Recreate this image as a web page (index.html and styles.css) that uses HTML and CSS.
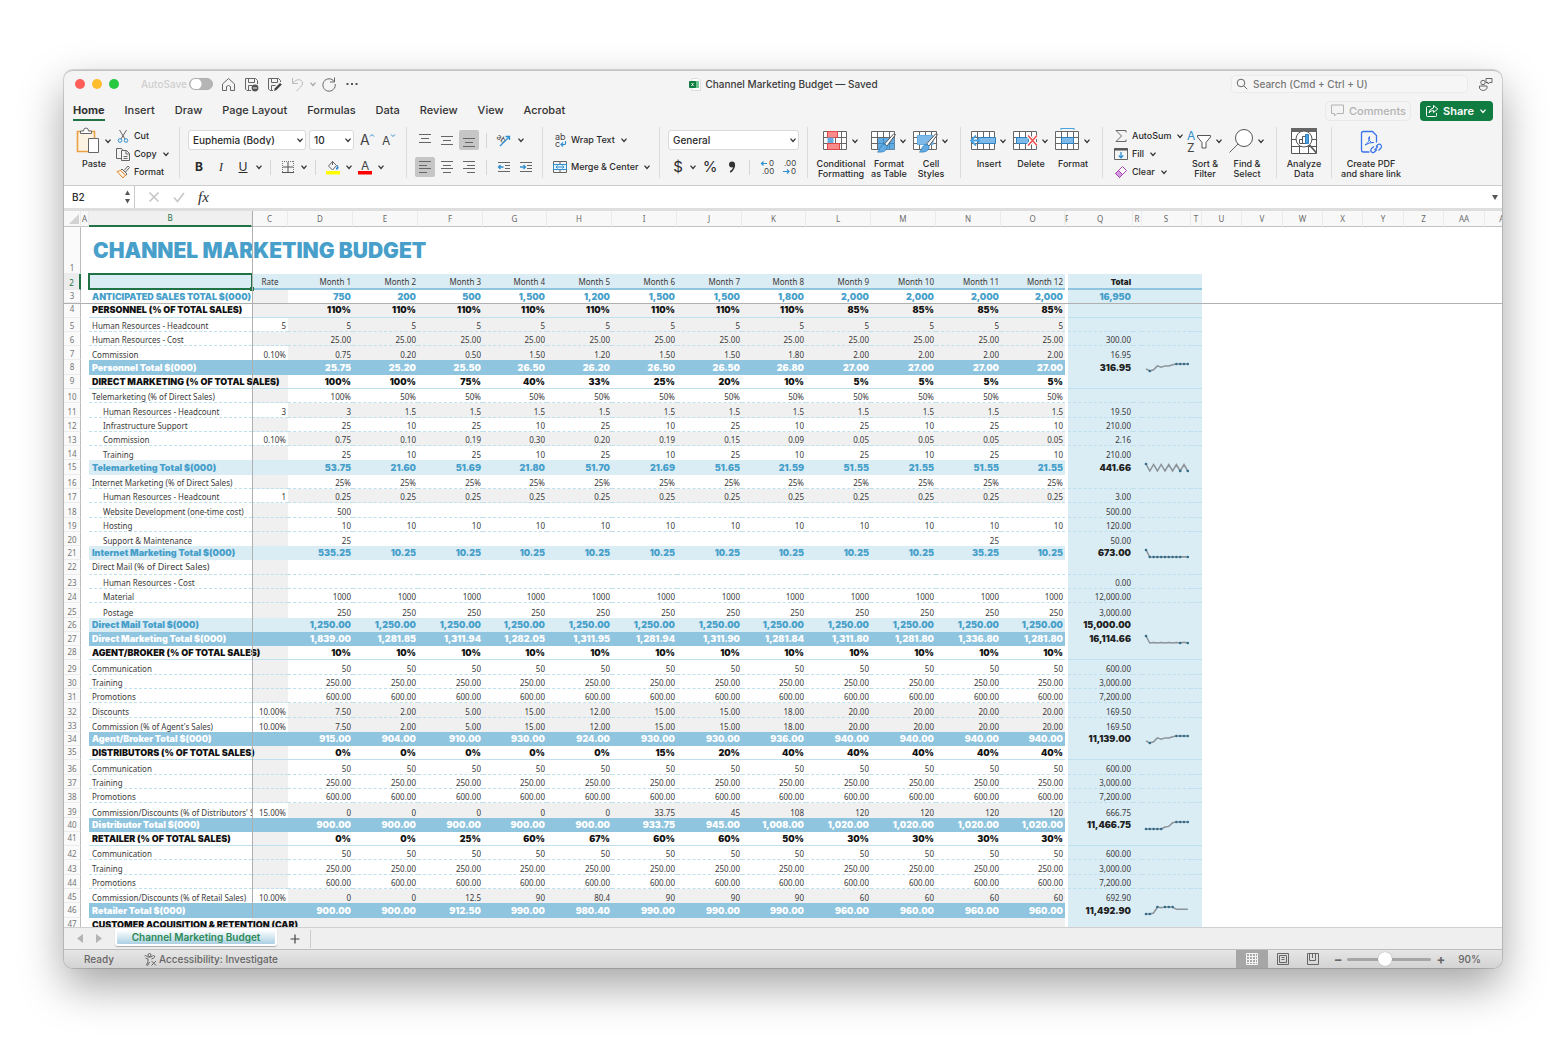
FILE: index.html
```html
<!DOCTYPE html>
<html lang="en">
<head>
<meta charset="utf-8">
<title>Channel Marketing Budget</title>
<link rel="stylesheet" href="styles.css">
</head>
<body>
<svg class="defs" aria-hidden="true">
  <symbol id="chev" viewBox="0 0 8 8"><path d="M1.500 2.600 4 5.400 6.500 2.600" fill="none" stroke="currentColor" stroke-width="1.300"/></symbol>
  <symbol id="grid" viewBox="0 0 26 26"><path d="M1.500 3.500h23v18h-23zM1.500 9.500h23M1.500 15.500h23M7.500 3.500v18M13.500 3.500v18M19.500 3.500v18" fill="#fff" stroke="#666"/></symbol>
  <symbol id="brush" viewBox="0 0 26 26"><path d="M25.500 6.500 17 18l-2.500-2L23.500 6z" fill="#fff" stroke="#555"/><path d="M14 16.500c2 0 3.500 1.500 3 3.500-1 3.500-5 4.500-9.500 4 2.500-1.500 1.500-6 6.500-7.500z" fill="#62ace3" stroke="#2f80bd" stroke-width=".8"/></symbol>
</svg>

<main class="window">
  <header class="titlebar">
    <div class="tools">
      <span class="lights"><i class="red"></i><i class="amber"></i><i class="green"></i></span>
      <label class="autosave">AutoSave <input type="checkbox" class="toggle"></label>
      <button aria-label="Home"><svg width="15" height="15" viewBox="0 0 15 15"><path d="M1.500 7 7.500 1.500 13.500 7v6.500h-4V9.500q-2-2-4 0v4h-4z" class="ln"/></svg></button>
      <button aria-label="Save"><svg width="15" height="15" viewBox="0 0 15 15"><path d="M7 13.500H3L1.500 12V1.500h10l2 2V7M4.500 1.500v4h6v-4M4.500 13V8.500h4" class="ln"/><circle cx="11" cy="11" r="3.400" fill="#555"/><path d="M9 11h4" stroke="#eee"/></svg></button>
      <button aria-label="Save as"><svg width="15" height="15" viewBox="0 0 15 15"><path d="M6 13.500H3L1.500 12V1.500h10l2 2V5M4.500 1.500v4h6v-4M4.500 13V8.500h4" class="ln"/><path d="m7 14 .8-2.800L13 6l1.800 1.600L9.500 13z" fill="#444"/></svg></button>
      <button aria-label="Undo" class="dim"><svg width="15" height="15" viewBox="0 0 15 15"><path d="M2.500 1v5.500H8M2.500 6.500C6 1.500 12 1.500 12.500 6c.2 3-3 4.500-6 8" class="ln"/></svg></button>
      <svg class="chev dim"><use href="#chev"/></svg>
      <button aria-label="Redo"><svg width="16" height="16" viewBox="0 0 16 16"><path d="M13.500 1.500v4.500H9M13.200 5.500A6.200 6.200 0 1 0 14.200 8" class="ln"/></svg></button>
      <button aria-label="More"><svg width="14" height="14" viewBox="0 0 14 14"><path d="M1.500 7h2M6 7h2M10.500 7h2" stroke="#555" stroke-width="2"/></svg></button>
    </div>
    <h1 class="doc"><svg width="13" height="13" viewBox="0 0 13 13"><path d="M4 .5h6l2.500 2.500v9.500H4z" fill="#fff" stroke="#ddd"/><path d="M7 3h4v7H7z" fill="#6fc492"/><rect x="1" y="3" width="7" height="7" rx="1" fill="#107c41"/><path d="m3.500 5 2 3M5.500 5l-2 3" stroke="#fff" stroke-width=".8"/></svg>Channel Marketing Budget — Saved</h1>
    <div class="find">
      <label class="search"><svg width="12" height="12" viewBox="0 0 12 12"><circle cx="5" cy="5" r="3.800" class="ln"/><path d="m8 8 3.200 3.200" class="ln"/></svg><input type="search" aria-label="Search" placeholder="Search (Cmd + Ctrl + U)"></label>
      <button aria-label="Share presence"><svg width="15" height="15" viewBox="0 0 15 15"><path d="M8 1.500h6v4h-2.500L10 7V5.500H8z" class="ln"/><circle cx="5" cy="5.500" r="2.200" class="ln"/><path d="M1.500 9h7.500v2.500q-3.700 4-7.500 0z" class="ln"/></svg></button>
    </div>
  </header>

  <nav class="tabs">
    <a href="#" class="on">Home</a><a href="#">Insert</a><a href="#">Draw</a><a href="#">Page Layout</a><a href="#">Formulas</a><a href="#">Data</a><a href="#">Review</a><a href="#">View</a><a href="#">Acrobat</a>
    <button class="comments"><svg width="15" height="15" viewBox="0 0 15 15"><path d="M1.500 2h12v8.500H7L4.500 13v-2.500h-3z" class="ln"/></svg>Comments</button>
    <button class="share"><svg width="14" height="14" viewBox="0 0 14 14"><path d="M5.500 2.500h-3q-1 0-1 1v8q0 1 1 1h8q1 0 1-1V9M8.500 1.500 12.800 5 8.500 8.500v-2q-3 0-4.500 2.500.5-4.500 4.500-5z" fill="none" stroke="#fff"/></svg>Share<svg class="chev"><use href="#chev"/></svg></button>
  </nav>

  <section class="ribbon" aria-label="Home ribbon">
    <div class="group g-clip">
      <button class="big paste"><span class="art"><svg width="26" height="28" viewBox="0 0 26 28"><path d="M2.500 4.500h17v20h-17z" fill="#fdf3e3" stroke="#eca045" stroke-width="1.600"/><path d="M5.500 6.500V4h3q0-3 2.500-3t2.500 3h3v2.500z" fill="#fff" stroke="#666"/><path d="M13.500 11.500h10v14h-10z" fill="#fff" stroke="#666"/></svg><svg class="chev"><use href="#chev"/></svg></span>Paste</button>
      <div class="stack">
        <button><svg width="14" height="14" viewBox="0 0 14 14"><path d="M3.500 1 9 10M10.500 1 5 10" class="ln"/><circle cx="4" cy="11.500" r="1.800" fill="none" stroke="#2f8fd0"/><circle cx="10" cy="11.500" r="1.800" fill="none" stroke="#2f8fd0"/></svg>Cut</button>
        <button><svg width="14" height="14" viewBox="0 0 14 14"><path d="M5 11.500H.500v-10h5l1.500 2M5.500 3.500h5l3 3v7h-8zM10 3.500V7h3.500M7.500 9.500h4M7.500 11.500h4" class="ln"/></svg>Copy<svg class="chev"><use href="#chev"/></svg></button>
        <button><svg width="14" height="14" viewBox="0 0 14 14"><path d="M8 5.500 12 1l1.500 1.500L9.500 7M6 4l5 5-1.500 1.500-5-5z" class="ln"/><path d="M4.500 5.500 1 6.500 7 13l2.500-3z" fill="#fdf3e3" stroke="#e8872e"/></svg>Format</button>
      </div>
    </div>

    <div class="group rows g-font">
      <div class="row">
        <span class="pick font"><select aria-label="Font"><option>Euphemia (Body)</option></select><svg class="chev"><use href="#chev"/></svg></span>
        <span class="pick size"><select aria-label="Font size"><option>10</option></select><svg class="chev"><use href="#chev"/></svg></span>
        <button class="ib" aria-label="Grow font"><svg width="16" height="18" viewBox="0 0 16 18"><text x="1" y="14" font-size="14" fill="#444">A</text><path d="m11 5.500 2-2 2 2" fill="none" stroke="#2f8fd0"/></svg></button>
        <button class="ib" aria-label="Shrink font"><svg width="16" height="18" viewBox="0 0 16 18"><text x="1" y="14" font-size="12" fill="#444">A</text><path d="m10 3.500 2 2 2-2" fill="none" stroke="#2f8fd0"/></svg></button>
      </div>
      <div class="row">
        <button class="ib bold">B</button><button class="ib ital">I</button><button class="ib under">U</button><svg class="chev"><use href="#chev"/></svg>
        <i class="sep"></i>
        <button class="ib" aria-label="Borders"><svg width="14" height="14" viewBox="0 0 14 14"><path d="M1.500 1v11M12.500 1v11M1 1.500h12" stroke="#777" stroke-dasharray="1 1"/><path d="M1 12.500h12M7 2v10M2 7h10" stroke="#555"/></svg></button><svg class="chev"><use href="#chev"/></svg>
        <i class="sep"></i>
        <button class="ib" aria-label="Fill colour"><svg width="14" height="15" viewBox="0 0 14 15"><path d="m6.500 1.500 4 4-4 4.500-4-4zM6.500 5V1" class="ln"/><path d="M11 5q2 3 .5 4t-1-1" fill="#2f8fd0" stroke="#2f8fd0"/><path d="M0 11h14v3.500H0z" fill="#ffff00"/></svg></button><svg class="chev"><use href="#chev"/></svg>
        <button class="ib" aria-label="Font colour"><svg width="14" height="16" viewBox="0 0 14 16"><text x="3" y="11" font-size="12" fill="#444">A</text><path d="M0 12h14v3.500H0z" fill="#f00"/></svg></button><svg class="chev"><use href="#chev"/></svg>
      </div>
    </div>

    <div class="group rows g-align">
      <div class="row">
        <button class="ab" aria-label="Top align"><svg width="14" height="14" viewBox="0 0 14 14"><path d="M1 1.500h12M3 5.500h8M1 9.500h12" class="ln"/></svg></button>
        <button class="ab" aria-label="Middle align"><svg width="14" height="14" viewBox="0 0 14 14"><path d="M1 3.500h12M3 7.500h8M1 11.500h12" class="ln"/></svg></button>
        <button class="ab on" aria-label="Bottom align"><svg width="14" height="14" viewBox="0 0 14 14"><path d="M1 5.500h12M3 9.500h8M1 13.500h12" class="ln"/></svg></button>
        <i class="sep"></i>
        <button class="ab" aria-label="Orientation"><svg width="16" height="14" viewBox="0 0 16 14"><text x="0" y="7" font-size="8" fill="#444" transform="rotate(35 3 6)">ab</text><path d="M4 13 13 4M9.500 3.500h4V7" fill="none" stroke="#2f8fd0" stroke-width="1.300"/></svg></button><svg class="chev"><use href="#chev"/></svg>
      </div>
      <div class="row">
        <button class="ab on" aria-label="Align left"><svg width="14" height="14" viewBox="0 0 14 14"><path d="M1 1.500h12M1 5.500h8M1 8.500h12M1 12.500h8" class="ln"/></svg></button>
        <button class="ab" aria-label="Center"><svg width="14" height="14" viewBox="0 0 14 14"><path d="M1 1.500h12M3 5.500h8M1 8.500h12M3 12.500h8" class="ln"/></svg></button>
        <button class="ab" aria-label="Align right"><svg width="14" height="14" viewBox="0 0 14 14"><path d="M1 1.500h12M5 5.500h8M1 8.500h12M5 12.500h8" class="ln"/></svg></button>
        <i class="sep"></i>
        <button class="ab" aria-label="Decrease indent"><svg width="14" height="14" viewBox="0 0 14 14"><path d="M1 2.500h12M8 5.500h5M8 8.500h5M1 11.500h12" class="ln"/><path d="M6.500 7H1.500M3.500 5l-2 2 2 2" fill="none" stroke="#2f8fd0" stroke-width="1.300"/></svg></button>
        <button class="ab" aria-label="Increase indent"><svg width="14" height="14" viewBox="0 0 14 14"><path d="M1 2.500h12M8 5.500h5M8 8.500h5M1 11.500h12" class="ln"/><path d="M1 7h5.500M4.500 5l2 2-2 2" fill="none" stroke="#2f8fd0" stroke-width="1.300"/></svg></button>
      </div>
    </div>

    <div class="group rows g-wrap">
      <button class="txt"><svg width="14" height="16" viewBox="0 0 14 16"><text x="2" y="8" font-size="9" fill="#444">ab</text><text x="2" y="15" font-size="9" fill="#444">c</text><path d="M12.500 9v2.500q0 1-1 1H8M10 10.500l-2 2 2 2" fill="none" stroke="#2f8fd0" stroke-width="1.200"/></svg>Wrap Text<svg class="chev"><use href="#chev"/></svg></button>
      <button class="txt"><svg width="14" height="14" viewBox="0 0 14 14"><path d="M.500 1.500h13v11H.500zM7 1.500V4M7 10v2.500" class="ln"/><path d="M.500 4.500h13v5H.500z" fill="#e4f2fb" stroke="#2f8fd0"/><path d="M3 7h8M4.500 5.500 3 7l1.500 1.500M9.500 5.500 11 7 9.500 8.500" fill="none" stroke="#2f8fd0"/></svg>Merge &amp; Center<svg class="chev"><use href="#chev"/></svg></button>
    </div>

    <div class="group rows g-num">
      <span class="pick general"><select aria-label="Number format"><option>General</option></select><svg class="chev"><use href="#chev"/></svg></span>
      <div class="row">
        <button class="nb">$</button><svg class="chev"><use href="#chev"/></svg><button class="nb pct">%</button><button class="nb comma" aria-label="Comma style"><svg width="10" height="14" viewBox="0 0 10 14"><circle cx="5" cy="4.500" r="3" fill="#333"/><path d="M7.200 4q1 4.500-4 8" fill="none" stroke="#333" stroke-width="1.600"/></svg></button>
        <i class="sep"></i>
        <button class="nb" aria-label="Increase decimal"><svg width="14" height="16" viewBox="0 0 14 16"><text x="9" y="7" font-size="8" fill="#444">0</text><text x="2" y="15" font-size="8" fill="#444">.00</text><path d="M7 4.500H1.500M3.500 2.500l-2 2 2 2" fill="none" stroke="#2f8fd0" stroke-width="1.200"/></svg></button>
        <button class="nb" aria-label="Decrease decimal"><svg width="14" height="16" viewBox="0 0 14 16"><text x="2" y="7" font-size="8" fill="#444">.00</text><text x="9" y="15" font-size="8" fill="#444">0</text><path d="M1 12.500h6M5 10.500l2 2-2 2" fill="none" stroke="#2f8fd0" stroke-width="1.200"/></svg></button>
      </div>
    </div>

    <div class="group g-style">
      <button class="big w52"><span class="art"><svg width="26" height="26" viewBox="0 0 26 26"><use href="#grid"/><path d="M5.500 3.500h10v6h-10z" fill="#fb8b8b" stroke="#e04848"/><path d="M5.500 9.500h6v6h-6z" fill="#62ace3"/><path d="M5.500 15.500h12v6h-12z" fill="#fb8b8b" stroke="#e04848"/></svg><svg class="chev"><use href="#chev"/></svg></span>Conditional<br>Formatting</button>
      <button class="big w44"><span class="art"><svg width="26" height="26" viewBox="0 0 26 26"><use href="#grid"/><path d="M8 10h16.500v11.500H8z" fill="#62ace3"/><path d="M8 15.500h16M13.500 10v11M19.500 10v11" stroke="#3f87c0"/><use href="#brush"/></svg><svg class="chev"><use href="#chev"/></svg></span>Format<br>as Table</button>
      <button class="big w40"><span class="art"><svg width="26" height="26" viewBox="0 0 26 26"><use href="#grid"/><path d="M5.500 7.500h15.500v9H5.500z" fill="#7dbaea" stroke="#62ace3"/><use href="#brush"/></svg><svg class="chev"><use href="#chev"/></svg></span>Cell<br>Styles</button>
    </div>

    <div class="group g-cells">
      <button class="big w42"><span class="art"><svg width="26" height="26" viewBox="0 0 26 26"><use href="#grid"/><path d="M8 9.500h17.500v6H8z" fill="#7dbaea" stroke="#2f80bd"/><path d="M10 12.500H1.500M6 7.500l-5 5 5 5" fill="none" stroke="#4aa3e0" stroke-width="1.800"/></svg><svg class="chev"><use href="#chev"/></svg></span>Insert</button>
      <button class="big w42"><span class="art"><svg width="26" height="26" viewBox="0 0 26 26"><use href="#grid"/><path d="M4.500 9.500h12v6h-12z" fill="#7dbaea" stroke="#2f80bd"/><path d="m16 7.500 9 10M25 7.500l-9 10" stroke="#fff" stroke-width="4"/><path d="m16 7.500 9 10M25 7.500l-9 10" stroke="#ee4b4b" stroke-width="1.400"/></svg><svg class="chev"><use href="#chev"/></svg></span>Delete</button>
      <button class="big w42"><span class="art"><svg width="26" height="26" viewBox="0 0 26 26"><use href="#grid"/><path d="M7.500 9.500h12v6h-12z" fill="#7dbaea" stroke="#2f80bd"/><path d="M7 .500h13M7 0v2M20 0v2" stroke="#4aa3e0"/></svg><svg class="chev"><use href="#chev"/></svg></span>Format</button>
    </div>

    <div class="group g-edit">
      <div class="stack">
        <button><svg width="14" height="14" viewBox="0 0 14 14"><path d="M12 3.500V1.500H2L7.500 7 2 12.500h10v-2" class="ln"/></svg>AutoSum<svg class="chev"><use href="#chev"/></svg></button>
        <button><svg width="14" height="14" viewBox="0 0 14 14"><path d="M.500 1.500h13v11H.500z" class="ln"/><path d="M0 2.500h14" stroke="#555" stroke-width="2"/><path d="M7 5v6M4.800 8.500 7 10.800l2.200-2.300" fill="none" stroke="#2f8fd0" stroke-width="1.300"/></svg>Fill<svg class="chev"><use href="#chev"/></svg></button>
        <button><svg width="14" height="14" viewBox="0 0 14 14"><path d="m8.500 1.500 4 4-7 7-4-4z" fill="#fff" stroke="#a33fb0"/><path d="m4.500 5.500 4 4-3 3-4-4z" fill="#d59be0" stroke="#a33fb0"/></svg>Clear<svg class="chev"><use href="#chev"/></svg></button>
      </div>
      <button class="big w42"><span class="art"><svg width="26" height="26" viewBox="0 0 26 26"><text x="1" y="12" font-size="12" fill="#2f8fd0">A</text><text x="1" y="24" font-size="12" fill="#444">Z</text><path d="M11.500 7.500h13V9L20 14.500v5.500h-4v-5.500L11.500 9z" fill="#fff" stroke="#555"/></svg><svg class="chev"><use href="#chev"/></svg></span>Sort &amp;<br>Filter</button>
      <button class="big w42"><span class="art"><svg width="26" height="26" viewBox="0 0 26 26"><circle cx="16" cy="10" r="8.500" fill="#fff" stroke="#555"/><path d="M10 16 1.500 24.500" class="ln"/></svg><svg class="chev"><use href="#chev"/></svg></span>Find &amp;<br>Select</button>
    </div>

    <div class="group g-data">
      <button class="big"><span class="art"><svg width="28" height="28" viewBox="0 0 28 28"><path d="M1.500 1.500h25v25h-25zM1.500 12.500h25M1.500 19.500h25M9.500 6v20M18.500 6v20" fill="#fff" stroke="#555"/><path d="M1 1h26v4H1z" fill="#666"/><circle cx="14" cy="12" r="8" fill="#fff" stroke="#555"/><path d="m19.500 18 7 8" stroke="#555" stroke-width="1.600"/><path d="M9.500 12.500h3v4h-3zM12.500 9.500h3v7h-3z" fill="#fff" stroke="#555"/><path d="M15.500 7.500h3v9h-3z" fill="#4aa3e0" stroke="#2f80bd"/></svg></span>Analyze<br>Data</button>
    </div>
    <div class="group g-pdf">
      <button class="big"><span class="art"><svg width="24" height="26" viewBox="0 0 24 26"><path d="M10.500 24h-6q-2 0-2-2V5.500q0-2 2-2h9l4 4v7" fill="none" stroke="#3b73e8" stroke-width="1.300"/><path d="M6 17q5-3 4.500-8.500-2 1 0 4T15 14.500q-4-.5-9 2.500z" fill="none" stroke="#3b73e8"/><path d="m17 18.500 2-2q2-1 3 .5t0 3l-2.500 2.500M18 21.500l-2 2q-2 2-3.500.5t0-3.500l2.500-2M15.500 22l3.500-3.500" fill="none" stroke="#3b73e8" stroke-width="1.200"/></svg></span>Create PDF<br>and share link</button>
    </div>
  </section>

  <div class="formula">
    <label class="namebox"><input aria-label="Name box" value="B2"><svg width="7" height="16" viewBox="0 0 7 16"><path d="M3.500 1.500 6 6H1zM3.500 14.500 6 10H1z" fill="#555"/></svg></label>
    <button aria-label="Cancel"><svg width="12" height="12" viewBox="0 0 12 12"><path d="m1.500 1.500 9 9M10.500 1.500l-9 9" stroke="#c6c6c6" stroke-width="1.600"/></svg></button>
    <button aria-label="Enter"><svg width="12" height="12" viewBox="0 0 12 12"><path d="m1 6.500 3.500 4L11 2" fill="none" stroke="#c6c6c6" stroke-width="1.600"/></svg></button>
    <span class="fx">fx</span>
    <input class="entry" aria-label="Formula">
    <button aria-label="Expand"><svg width="6" height="6" viewBox="0 0 6 6"><path d="M0 1h6L3 6z" fill="#555"/></svg></button>
  </div>

  <section class="sheet">
    <table id="grid-table"></table>
    <i class="freeze-x"></i><i class="freeze-y"></i>
  </section>

  <div class="sheetbar">
    <button aria-label="Previous sheet"><svg width="6" height="9" viewBox="0 0 6 9"><path d="M6 0v9L0 4.500z" fill="#b4b4b4"/></svg></button>
    <button aria-label="Next sheet"><svg width="6" height="9" viewBox="0 0 6 9"><path d="M0 0v9l6-4.500z" fill="#b4b4b4"/></svg></button>
    <button class="tab">Channel Marketing Budget</button>
    <button class="add" aria-label="Add sheet"><svg width="10" height="10" viewBox="0 0 10 10"><path d="M5 .500v9M.500 5h9" stroke="#444" stroke-width="1.200"/></svg></button>
  </div>

  <footer class="status">
    <span>Ready</span>
    <button class="access"><svg width="13" height="13" viewBox="0 0 13 13"><circle cx="5.500" cy="2" r="1.500" class="ln"/><path d="M.500 3q1-1 2 0l1.500 1h3l1.500-1q1-1 2 0T9.500 5L7.500 6M1.500 5 4 6v2.500L2.500 12q.5 1 1.500 0l1.500-3" class="ln"/><path d="m7.500 8 4.500 4.500M12 8l-4.500 4.500" class="ln"/></svg>Accessibility: Investigate</button>
    <span class="views">
      <button class="on" aria-label="Normal view"><svg width="12" height="12" viewBox="0 0 12 12"><path d="M.500.500h11v11H.500zM.500 3.500h11M.500 6.500h11M.500 9.500h11M3.500.500v11M6.500.500v11M9.500.500v11" fill="none" stroke="#f4f4f4"/></svg></button>
      <button aria-label="Page layout view"><svg width="12" height="12" viewBox="0 0 12 12"><path d="M.500.500h11v11H.500zM2.500 2.500h7v7h-7zM4.500 4.500h3M4.500 6.500h3" class="ln"/></svg></button>
      <button aria-label="Page break view"><svg width="12" height="12" viewBox="0 0 12 12"><path d="M.500.500h11v11H.500zM2.500 1v6.500h6V1M5.500 1v4" class="ln"/></svg></button>
    </span>
    <span class="zoom">
      <b>−</b><input type="range" min="0" max="100" value="44" aria-label="Zoom"><b>+</b><span class="pc">90%</span>
    </span>
  </footer>
</main>
<script src="app.js"></script>
</body>
</html>
```

FILE: styles.css
```css
* { box-sizing: border-box; }
body {
  margin: 0;
  height: 100vh;
  padding: 70px 58px 92px 64px;
  background: #fff;
  font: 500 11px/14px Inter, "Liberation Sans", sans-serif;
  color: #2b2b2b;
}
button, input, select { font: inherit; color: inherit; border: 0; margin: 0; padding: 0; background: none; }
button { display: flex; align-items: center; justify-content: center; white-space: nowrap; flex: none; }
svg { display: block; flex: none; overflow: visible; }
svg text { font-family: Inter, "Liberation Sans", sans-serif; font-weight: 400; }
.defs { position: absolute; width: 0; height: 0; }
.ln { fill: none; stroke: #666; stroke-width: 1; }
.dim { opacity: .4; }
.chev { width: 8px; height: 8px; margin: 0 1px; color: #333; }

.window {
  height: 100%;
  display: flex;
  flex-direction: column;
  overflow: hidden;
  border-radius: 9px;
  background: #f4f4f4;
  border-top: 1px solid #c4c4c4;
  box-shadow: 0 0 0 1px rgba(0, 0, 0, .14), 0 18px 44px rgba(0, 0, 0, .36);
}

/* Title bar */
.titlebar { display: grid; grid-template-columns: 1fr auto 1fr; align-items: center; height: 26px; flex: none; }
.tools { display: flex; align-items: center; gap: 8px; padding-left: 11px; }
.lights { display: flex; gap: 7px; margin-right: 14px; }
.lights i { width: 10px; height: 10px; border-radius: 50%; }
.red { background: #fe5f57; }
.amber { background: #febc2e; }
.green { background: #28c840; }
.autosave { display: flex; align-items: center; gap: 2px; color: #cfcfcf; font-size: 10px; }
.toggle { appearance: none; width: 24px; height: 12px; border-radius: 6px; background: radial-gradient(circle at 6px 5px, #fff 5px, #b5b5b5 6px); border: 1px solid #b0b0b0; }
.tools > .chev { margin: 0 -4px; }
.doc { display: flex; align-items: center; gap: 4px; margin: 0; font: 500 10px/14px Inter, "Liberation Sans", sans-serif; color: #3a3a3a; }
.find { display: flex; justify-content: flex-end; align-items: center; gap: 10px; padding-right: 9px; }
.search { display: flex; align-items: center; gap: 5px; width: 237px; height: 18px; padding-left: 4px; border: 1px solid #ebebeb; border-radius: 4px; background: #f6f6f6; }
.search input { flex: 1; outline: 0; font-size: 10px; }
.search input::placeholder { color: #777; opacity: 1; }

/* Ribbon tabs */
.tabs { display: flex; align-items: center; gap: 20px; height: 27px; padding: 0 9px; flex: none; }
.tabs a { color: #333; text-decoration: none; line-height: 18px; border-bottom: 2px solid transparent; }
.tabs a.on { font-weight: 700; border-color: #217346; }
.comments { margin-left: auto; margin-right: -11px; width: 86px; height: 20px; gap: 4px; border: 1px solid #e8e8e8; border-radius: 5px; color: #b3b3b3; }
.comments .ln { stroke: #b3b3b3; }
.share { width: 73px; height: 20px; gap: 4px; border-radius: 4px; background: #107c41; color: #fff; font-weight: 600; }
.share .chev { color: #fff; }

/* Ribbon */
.ribbon { display: flex; height: 61px; flex: none; padding: 3px 0 7px; font-size: 9px; line-height: 10px; }
.group { display: flex; flex: none; border-right: 1px solid #dcdcdc; }
.rows { flex-direction: column; gap: 7px; padding-top: 3px; padding-left: 8px; }
.rows > * { height: 20px; }
.row { display: flex; align-items: center; }
.sep { width: 1px; height: 15px; background: #d5d5d5; margin: 0 7px; }
.stack { display: flex; flex-direction: column; gap: 4px; }
.stack button, .txt { gap: 4px; height: 14px; justify-content: flex-start; }
.rows .txt { height: 20px; }
.big { align-self: flex-start; display: block; font-size: 9px; line-height: 10px; text-align: center; }
.art { display: flex; align-items: center; justify-content: center; gap: 2px; height: 28px; margin-bottom: 4px; }
.w52 { width: 52px; }
.w44 { width: 44px; }
.w42 { width: 42px; }
.w40 { width: 40px; }
.g-clip { width: 116px; padding-left: 12px; gap: 4px; }
.g-clip .stack, .g-edit .stack { padding-top: 2px; }
.paste { width: 36px; }
.g-font { width: 227px; }
.pick { display: inline-grid; align-items: center; height: 20px; border: 1px solid #d9d9d9; border-radius: 3px; background: #fff; font-size: 10px; }
.pick select, .pick .chev { grid-area: 1 / 1; }
.pick select { appearance: none; width: 100%; padding-left: 4px; outline: 0; }
.pick .chev { justify-self: end; }
.font { width: 118px; margin-right: 3px; }
.size { width: 45px; margin-right: 2px; }
.ib { width: 22px; height: 20px; font-size: 12px; }
.bold { font-weight: 700; }
.ital { font-family: "Liberation Serif", serif; font-style: italic; }
.under { text-decoration: underline; font-weight: 400; }
.g-font .row + .row .sep { margin: 0 6px; }
.g-align { width: 136px; }
.g-align .row { gap: 2px; }
.g-align .sep { margin: 0 5px; }
.ab { width: 20px; height: 20px; border-radius: 2px; }
.on.ab { background: #c6c6c6; }
.g-wrap { width: 117px; padding-left: 10px; }
.g-num { width: 148px; }
.general { width: 131px; }
.nb { width: 20px; height: 20px; font-size: 15px; font-weight: 400; }
.nb + .nb { margin-left: 2px; }
.pct { margin-left: 2px; }
.g-style { width: 153px; padding-left: 7px; }
.g-cells { width: 142px; padding-left: 7px; }
.g-edit { width: 174px; padding-left: 11px; }
.g-edit .stack { width: 70px; }
.g-data { width: 55px; justify-content: center; }
.g-pdf { width: 78px; justify-content: center; border: 0; }

/* Formula bar */
.formula { display: flex; align-items: center; gap: 13px; height: 26px; flex: none; border-top: 1px solid #cdcdcd; border-bottom: 3px solid #dedede; background: #fff; padding-right: 4px; }
.namebox { display: flex; align-items: center; width: 71px; height: 100%; padding: 0 3px 0 8px; border-right: 1px solid #c9c9c9; font-size: 10px; }
.namebox input { flex: 1; min-width: 0; outline: 0; }
.fx { font: italic 15px/18px "Liberation Serif", serif; }
.entry { flex: 1; outline: 0; }

/* Sheet */
.sheet { position: relative; flex: 1; min-height: 0; overflow: hidden; background: #fff; }
.sheet table { table-layout: fixed; border-collapse: separate; border-spacing: 0; font: 400 8px/10px "Noto Sans", sans-serif; color: #3a3a3a; }
.sheet tr { height: 14px; }
.sheet tbody tr:nth-child(7n+1), .sheet tbody tr:nth-child(7n+4) { height: 15px; }
.sheet td, .sheet th { padding: 0; white-space: nowrap; font-weight: 400; vertical-align: bottom; }
.sheet thead th { height: 16px; vertical-align: middle; overflow: hidden; color: #6a6a6a; background: #f8f8f8; border-right: 1px solid #ebebeb; border-bottom: 1px solid #c3c3c3; }
.sheet thead th.sel { color: #217346; background: #f0f0f0; border-bottom: 2px solid #217346; }
.sheet thead th.clip { text-align: left; border-right: 0; }
.corner svg { margin-left: auto; }
.sheet tbody th { text-align: center; color: #777; background: #fafafa; border-right: 1px solid #bdbdbd; border-bottom: 1px solid #ececec; overflow: hidden; line-height: 10px; }
.sheet tbody tr.title { height: 47px; }
.sheet tbody tr.months { height: 16px; }
.sheet tbody tr.sales { height: 13px; }
.sheet .b { padding-left: 3px; }
.sheet .in .b { padding-left: 14px; }
.clipped { overflow: hidden; }
.sheet .v, .sheet .q { text-align: right; padding-right: 2px; }
.q, .tail { background: #daecf4; }
.shade { background: #f0f0f0; }
.dash .b, .dash .c, .dash .v, .dash .q, .dash .tail { border-bottom: 1px dashed #bfe0ef; }
.sheet .title td { font: 900 21px/24px Inter, "Liberation Sans", sans-serif; color: #479fca; vertical-align: middle; padding-left: 4px; }
.months .b, .months .c, .months .v { background: #daecf4; }
.months .b, .months .c, .months .v, .months .q, .months .tail { border-bottom: 2px solid #90c5e0; }
.months .c { text-align: center; }
.sheet .months td, .sheet .months th { line-height: 12px; }
.sheet .months th { color: #217346; background: #ececec; border-right: 2px solid #217346; }
.sheet .months .q { font-family: Inter, sans-serif; font-weight: 900; color: #222; }
.sheet .sales td, .sheet .sec td, .sheet .total td, .sheet .sub td { font: 900 9px/12px Inter, "Liberation Sans", sans-serif; vertical-align: middle; }
.sheet .total th, .sheet .sub th, .sheet .sales th { vertical-align: middle; }
.sheet .sec th { vertical-align: top; line-height: 11px; }
.sheet .sales td { color: #479fca; }
.sheet .sec td { color: #111; }
.sec .b, .sec .c, .sec .v, .sec .q, .sec .tail { border-bottom: 1px solid #bfe0ef; }
.total .b, .total .c, .total .v { background: #90c5e0; color: #fff; }
.sub .b, .sub .c, .sub .v { background: #daecf4; color: #479fca; }
.total .q, .sub .q { color: #222; }
.mixed span { font-size: 9px; }
.sheet .mixed .b, .sheet .mixed th { vertical-align: middle; }
.spark { height: 13px; width: 48px; }
.freeze-x, .freeze-y { position: absolute; background: #b0b0b0; }
.freeze-x { left: 188px; top: 0; bottom: 9px; width: 1px; }
.freeze-y { left: 0; right: 0; top: 92px; height: 1px; }
.cursor { position: relative; }
.cursor::before { content: ""; position: absolute; inset: -1px -1px -2px -1px; border: 2px solid #217346; }
.cursor::after { content: ""; position: absolute; right: -2px; bottom: -3px; width: 4px; height: 4px; background: #217346; }

/* Sheet tabs */
.sheetbar { display: flex; align-items: center; height: 22px; flex: none; padding-left: 13px; gap: 13px; border-top: 1px solid #cfcfcf; background: #efefef; }
.tab { align-self: stretch; width: 162px; margin-bottom: 3px; border: 2px solid #fff; border-radius: 0 0 3px 3px; background: linear-gradient(#fff, #abd0e2) padding-box; color: #2a8a55; font-weight: 600; font-size: 10px; box-shadow: 0 1px 1px #aaa; }
.add { height: 18px; padding-right: 10px; border-right: 1px solid #ccc; }

/* Status bar */
.status { display: flex; align-items: center; height: 19px; flex: none; padding-left: 20px; gap: 30px; border-top: 1px solid #bdbdbd; background: linear-gradient(#e6e6e6, #d3d3d3); color: #666; font-size: 10px; }
.access { gap: 2px; }
.views { display: flex; align-self: stretch; margin-left: auto; }
.views button { width: 30px; }
.views .on { width: 32px; background: #a6a6a6; }
.zoom { display: flex; align-items: center; gap: 5px; margin-left: -24px; padding-right: 21px; }
.zoom b { font-size: 13px; }
.pc { margin-left: 8px; }
.zoom input { appearance: none; width: 84px; height: 3px; border-radius: 2px; background: #a6a6a6; }
.zoom input::-webkit-slider-thumb { appearance: none; width: 14px; height: 14px; border-radius: 50%; background: #fff; box-shadow: 0 0 1px #888; }
```

FILE: app.js
```js
// Column letters and widths, in pixels at 90% zoom.
const columns = [
  ["", 17], ["A", 8], ["B", 163], ["C", 36],
  ["D", 65], ["E", 65], ["F", 65], ["G", 64], ["H", 65], ["I", 65],
  ["J", 65], ["K", 64], ["L", 65], ["M", 65], ["N", 65], ["O", 64],
  ["P", 3], ["Q", 65], ["R", 9], ["S", 49], ["T", 11],
  ["U", 40], ["V", 41], ["W", 40], ["X", 40], ["Y", 41], ["Z", 40], ["AA", 41], ["AB", 40]
];

// kind | label | rate | twelve months (one value repeats) | total
// Suffixes: i = indented, g = shaded months, d = dashed rule below, s = trend line.
const rows = [
  "title|CHANNEL MARKETING BUDGET",
  "months||Rate|Month 1,Month 2,Month 3,Month 4,Month 5,Month 6,Month 7,Month 8,Month 9,Month 10,Month 11,Month 12|Total",
  "sales|ANTICIPATED SALES TOTAL $(000)||750;200;500;1,500;1,200;1,500;1,500;1,800;2,000;2,000;2,000;2,000|16,950",
  "sec g|PERSONNEL (% OF TOTAL SALES)||110% 110% 110% 110% 110% 110% 110% 110% 85% 85% 85% 85%|",
  "data g d|Human Resources - Headcount|5|5|",
  "data g d|Human Resources - Cost||25.00|300.00",
  "data g|Commission|0.10%|0.75 0.20 0.50 1.50 1.20 1.50 1.50 1.80 2.00 2.00 2.00 2.00|16.95",
  "total s|Personnel Total $(000)||25.75 25.20 25.50 26.50 26.20 26.50 26.50 26.80 27.00 27.00 27.00 27.00|316.95",
  "sec|DIRECT MARKETING (% OF TOTAL SALES)||100% 100% 75% 40% 33% 25% 20% 10% 5% 5% 5% 5%|",
  "data d|Telemarketing (% of Direct Sales)||100% 50% 50% 50% 50% 50% 50% 50% 50% 50% 50% 50%|",
  "data i g d|Human Resources - Headcount|3|3 1.5 1.5 1.5 1.5 1.5 1.5 1.5 1.5 1.5 1.5 1.5|19.50",
  "data i d|Infrastructure Support||25 10 25 10 25 10 25 10 25 10 25 10|210.00",
  "data i g d|Commission|0.10%|0.75 0.10 0.19 0.30 0.20 0.19 0.15 0.09 0.05 0.05 0.05 0.05|2.16",
  "data i|Training||25 10 25 10 25 10 25 10 25 10 25 10|210.00",
  "sub s|Telemarketing Total $(000)||53.75 21.60 51.69 21.80 51.70 21.69 51.65 21.59 51.55 21.55 51.55 21.55|441.66",
  "data d|Internet Marketing (% of Direct Sales)||25%|",
  "data i g d|Human Resources - Headcount|1|0.25|3.00",
  "data i d|Website Development (one-time cost)||500 - - - - - - - - - - -|500.00",
  "data i d|Hosting||10|120.00",
  "data i|Support &amp; Maintenance||25 - - - - - - - - - 25 -|50.00",
  "sub s|Internet Marketing Total $(000)||535.25 10.25 10.25 10.25 10.25 10.25 10.25 10.25 10.25 10.25 35.25 10.25|673.00",
  "data d mixed|Direct Mail <span>(% of Direct Sales)</span>||-|",
  "data i d|Human Resources - Cost||-|0.00",
  "data i d|Material||1000|12,000.00",
  "data i|Postage||250|3,000.00",
  "sub|Direct Mail Total $(000)||1,250.00|15,000.00",
  "total s|Direct Marketing Total $(000)||1,839.00 1,281.85 1,311.94 1,282.05 1,311.95 1,281.94 1,311.90 1,281.84 1,311.80 1,281.80 1,336.80 1,281.80|16,114.66",
  "sec|AGENT/BROKER (% OF TOTAL SALES)||10%|",
  "data d|Communication||50|600.00",
  "data d|Training||250.00|3,000.00",
  "data d|Promotions||600.00|7,200.00",
  "data g d|Discounts|10.00%|7.50 2.00 5.00 15.00 12.00 15.00 15.00 18.00 20.00 20.00 20.00 20.00|169.50",
  "data g|Commission (% of Agent's Sales)|10.00%|7.50 2.00 5.00 15.00 12.00 15.00 15.00 18.00 20.00 20.00 20.00 20.00|169.50",
  "total s|Agent/Broker Total $(000)||915.00 904.00 910.00 930.00 924.00 930.00 930.00 936.00 940.00 940.00 940.00 940.00|11,139.00",
  "sec|DISTRIBUTORS (% OF TOTAL SALES)||0% 0% 0% 0% 0% 15% 20% 40% 40% 40% 40% 40%|",
  "data d|Communication||50|600.00",
  "data d|Training||250.00|3,000.00",
  "data d|Promotions||600.00|7,200.00",
  "data g|Commission/Discounts (% of Distributors' Sal|15.00%|0 0 0 0 0 33.75 45 108 120 120 120 120|666.75",
  "total s|Distributor Total $(000)||900.00 900.00 900.00 900.00 900.00 933.75 945.00 1,008.00 1,020.00 1,020.00 1,020.00 1,020.00|11,466.75",
  "sec|RETAILER (% OF TOTAL SALES)||0% 0% 25% 60% 67% 60% 60% 50% 30% 30% 30% 30%|",
  "data d|Communication||50|600.00",
  "data d|Training||250.00|3,000.00",
  "data d|Promotions||600.00|7,200.00",
  "data g|Commission/Discounts (% of Retail Sales)|10.00%|0 0 12.5 90 80.4 90 90 90 60 60 60 60|692.90",
  "total s|Retailer Total $(000)||900.00 900.00 912.50 990.00 980.40 990.00 990.00 990.00 960.00 960.00 960.00 960.00|11,492.90",
  "sec g|CUSTOMER ACQUISITION &amp; RETENTION (CAR)||-|"
];

function monthValues(kind, text) {
  const list = kind === "months" ? text.split(",") : kind === "sales" ? text.split(";") : text.split(" ");
  return list.length === 1 ? Array(12).fill(list[0]) : list;
}

// Trend line with markers on every high and low point.
function sparkline(values) {
  const n = values.map(v => Number(v.replace(",", "")));
  const lo = Math.min(...n), hi = Math.max(...n);
  const pts = n.map((v, i) => [(4 + i * 3.8).toFixed(1), (10 - (v - lo) / (hi - lo) * 7).toFixed(1), v]);
  const dots = pts.filter(p => p[2] === lo || p[2] === hi).map(p => `<circle cx="${p[0]}" cy="${p[1]}" r="1.3" fill="#336c8a"/>`).join("");
  return `<svg class="spark" viewBox="0 0 48 13"><polyline points="${pts.map(p => p[0] + "," + p[1]).join(" ")}" fill="none" stroke="#8b9498" stroke-width="1.5"/>${dots}</svg>`;
}

const heads = columns.map(([name], i) => {
  if (i === 0) return `<th class="corner"><svg width="12" height="12" viewBox="0 0 12 12"><path d="M11 1v10H1z" fill="#d2d2d2"/></svg></th>`;
  const cls = name === "B" ? "sel" : name === "P" ? "clip" : "";
  return `<th scope="col" class="${cls}">${name}</th>`;
}).join("");

const body = rows.map((line, i) => {
  const [spec, label, rate = "", months = "", total = ""] = line.split("|");
  const [kind, ...flags] = spec.split(" ");
  const num = `<th scope="row">${i + 1}</th><td></td>`;
  if (kind === "title") return `<tr class="title">${num}<td>${label}</td></tr>`;
  const values = monthValues(kind, months);
  const has = f => flags.includes(f);
  const cls = [kind, has("i") && "in", has("d") && "dash", has("mixed") && "mixed"].filter(Boolean).join(" ");
  const rateShade = !rate && kind !== "total" && kind !== "sub" ? " shade" : "";
  const cells = values.map(v => `<td class="v${has("g") ? " shade" : ""}">${v === "-" ? "" : v}</td>`).join("");
  const bCls = "b" + (rate && kind === "data" ? " clipped" : "") + (kind === "months" ? " cursor" : "");
  return `<tr class="${cls}">${num}<td class="${bCls}">${label}</td><td class="c${kind === "months" ? "" : " v"}${rateShade}">${rate}</td>${cells}<td></td>` +
    `<td class="q">${total}</td><td class="tail"></td><td class="tail">${has("s") ? sparkline(values) : ""}</td><td class="tail"></td></tr>`;
}).join("");

const width = columns.reduce((sum, c) => sum + c[1], 0);
const table = document.getElementById("grid-table");
table.style.width = width + "px";
table.innerHTML = `<colgroup>${columns.map(c => `<col style="width:${c[1]}px">`).join("")}</colgroup><thead><tr>${heads}</tr></thead><tbody>${body}</tbody>`;
```
